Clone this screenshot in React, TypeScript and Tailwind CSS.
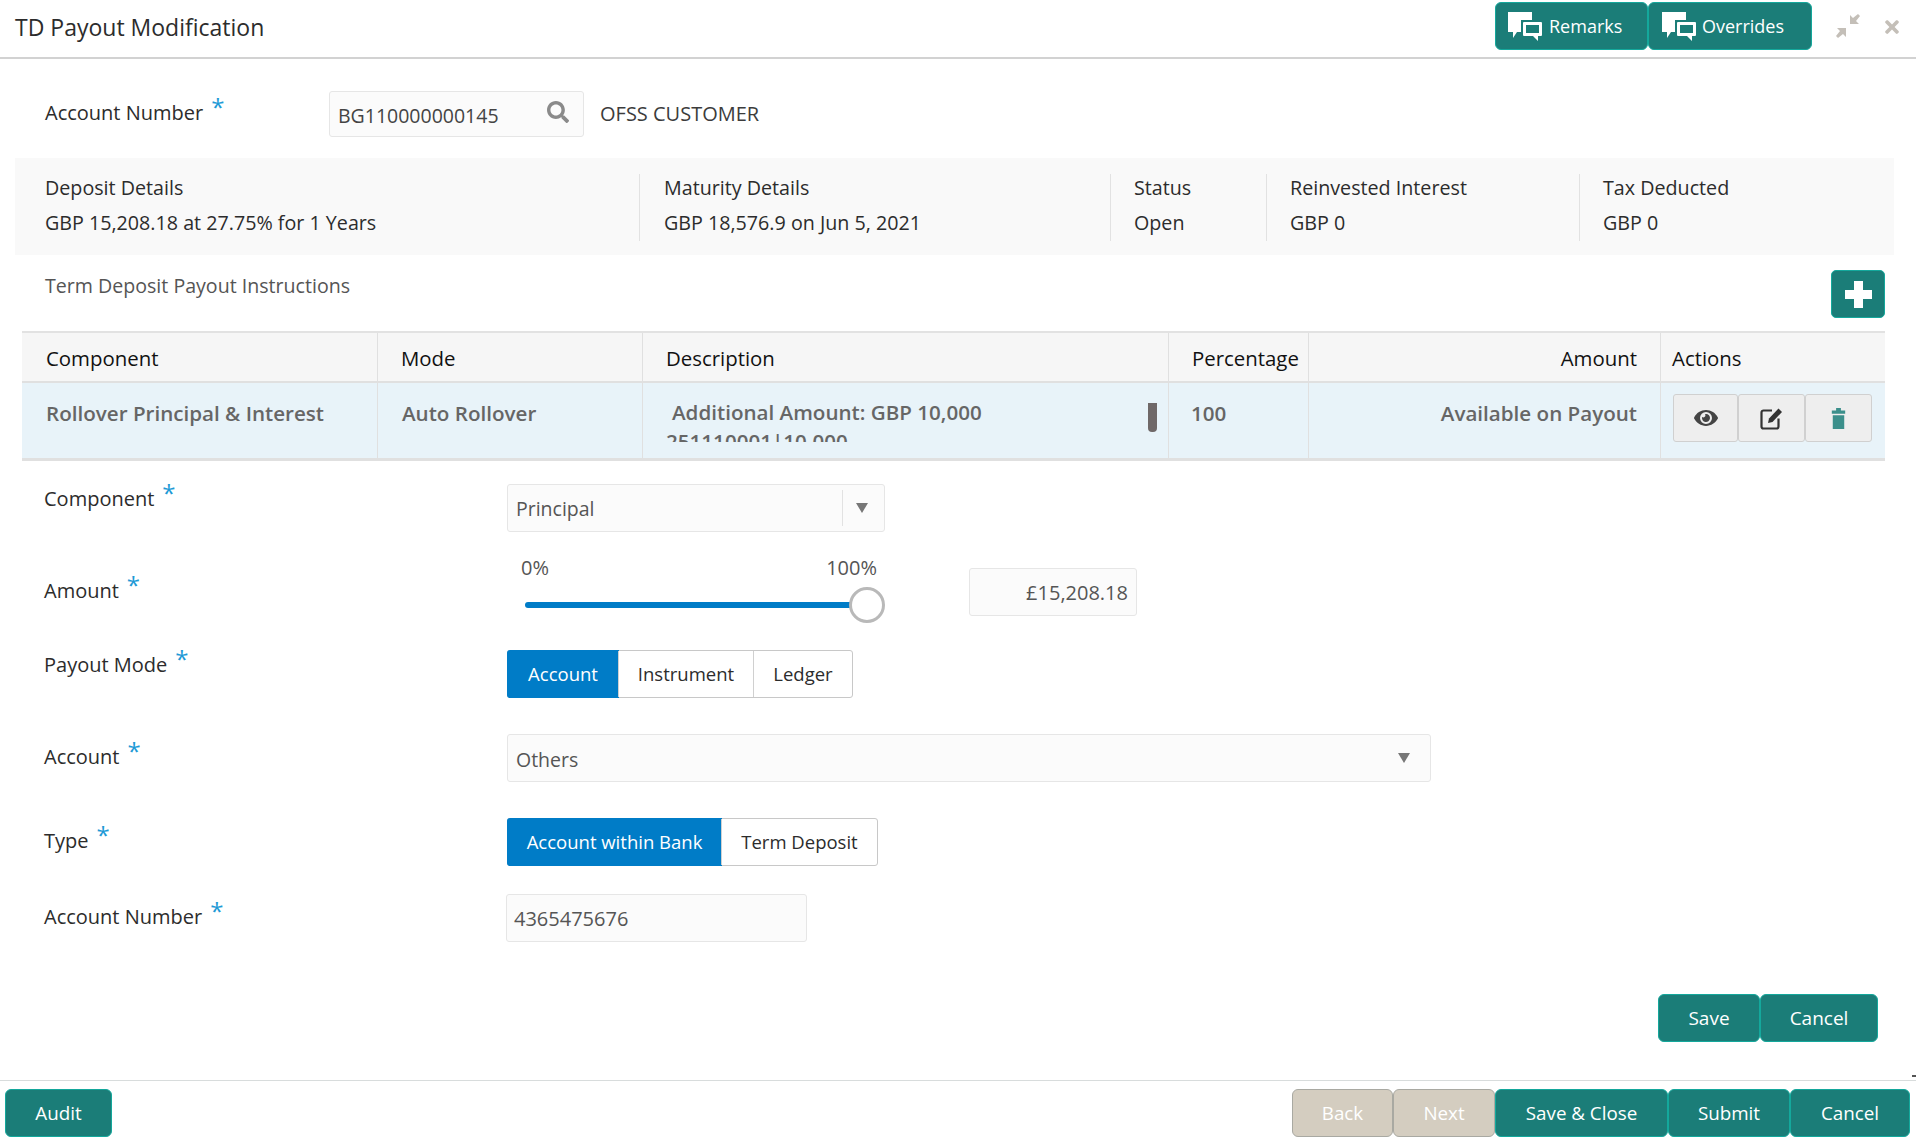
import { FaEye, FaSearch, FaTimes } from "react-icons/fa";

const teal = "bg-[#1b7d78] border border-[#14a89c] text-white rounded-[6px]";

const ChatIcon = () => (
  <svg width="36" height="30" viewBox="0 0 36 30" className="shrink-0">
    <path d="M1 1h24v20H10l-4 6v-6H1z" fill="#fff" />
    <path d="M14 9h22v17h-6v4l-6-4h-10z" fill="#1b7d78" />
    <path d="M17 11h17a1 1 0 0 1 1 1v12a1 1 0 0 1-1 1h-3v5l-5-5h-9a1 1 0 0 1-1-1V12a1 1 0 0 1 1-1zm2 3v8h13v-8z" fill="#fff" fillRule="evenodd" />
  </svg>
);

const Req = () => <span className="text-[#1e9ad6] text-[24px] leading-none ml-[8px] relative -top-[4px]">*</span>;

const Label = ({ text, className = "" }: { text: string; className?: string }) => (
  <div className={`w-[507px] pl-[44px] text-[20px] text-[#2c2c2c] shrink-0 ${className}`}>
    {text}
    <Req />
  </div>
);

const Segment = ({ items, widths }: { items: string[]; widths: string[] }) => (
  <div className="flex h-[48px] rounded-[3px] border border-[#c8c8c8] text-[18.5px] text-[#2c2c2c]">
    {items.map((item, i) => (
      <div
        key={item}
        className={`flex items-center justify-center ${widths[i]} ${i === 0 ? "bg-[#007cc7] text-white -m-px h-[48px] rounded-l-[3px]" : "border-l border-[#d0d0d0] first:border-0"}`}
      >
        {item}
      </div>
    ))}
  </div>
);

const SummaryCol = ({ title, value, className }: { title: string; value: string; className: string }) => (
  <div className={`h-[67px] flex flex-col gap-[8px] ${className}`}>
    <div className="text-[19.7px] leading-[27px] text-[#2c2c2c]">{title}</div>
    <div className="text-[19.7px] leading-[27px] text-[#2c2c2c]">{value}</div>
  </div>
);

const Caret = () => <div className="w-0 h-0 border-x-[6px] border-x-transparent border-t-[10px] border-t-[#777]" />;

const rowCell = "h-[78px] bg-[#e8f3f9] border-b-[3px] border-b-[#e0e0e0] pt-[15px] text-[20.6px] font-semibold text-[#666]";
const actionBtn = "h-[48px] bg-[#eeeeee] border border-[#d0d0d0] rounded-[3px] flex items-center justify-center";

export default function App() {
  return (
    <div className="w-[1916px] h-[1140px] bg-white flex flex-col overflow-hidden font-['Open_Sans','Noto_Sans',sans-serif] relative">
      <header className="h-[59px] shrink-0 border-b-2 border-[#d2d2d2] flex items-start pr-[14px]">
        <h1 className="pl-[15px] pt-[9px] text-[23px] leading-[36px] text-[#2c2c2c] flex-1">TD Payout Modification</h1>
        <div className="flex mt-[2px]">
          <button className={`${teal} w-[153px] h-[48px] flex items-center pl-[11px] gap-[6px] text-[18px]`}>
            <ChatIcon /> Remarks
          </button>
          <button className={`${teal} w-[164px] h-[48px] flex items-center pl-[12px] gap-[5px] text-[18px]`}>
            <ChatIcon /> Overrides
          </button>
        </div>
        <svg width="26" height="26" viewBox="0 0 26 26" className="ml-[23px] mt-[13px]" fill="#c4bfb8">
          <path d="M15 11V2l3 3 5-4 2 2-4 5 3 3zM11 15v9l-3-3-5 4-2-2 4-5-3-3z" />
        </svg>
        <FaTimes className="ml-[21px] mt-[17px] text-[#c4bfb8] text-[20px]" />
      </header>

      <section className="flex mt-[32px] h-[46px] shrink-0 items-start">
        <div className="w-[329px] pl-[45px] pt-[7px] text-[20px] text-[#2c2c2c]">
          Account Number
          <Req />
        </div>
        <div className="w-[255px] h-[46px] border border-[#e6e6e6] rounded-[3px] bg-[#fbfbfb] flex items-center justify-between pl-[8px] pr-[14px] text-[19.5px] text-[#444]">
          <span className="pt-[4px]">BG110000000145</span>
          <FaSearch className="text-[#8a8a8a] text-[22px] -mt-[4px]" />
        </div>
        <div className="ml-[16px] pt-[8px] text-[20px] text-[#3c3c3c]">OFSS CUSTOMER</div>
      </section>

      <section className="ml-[15px] mr-[22px] mt-[21px] h-[97px] shrink-0 bg-[#f9f9f9] flex items-center pt-[1px]">
        <SummaryCol className="w-[625px] pl-[30px] border-r border-[#e2e2e2]" title="Deposit Details" value="GBP 15,208.18 at 27.75% for 1 Years" />
        <SummaryCol className="w-[471px] pl-[24px] border-r border-[#e2e2e2]" title="Maturity Details" value="GBP 18,576.9 on Jun 5, 2021" />
        <SummaryCol className="w-[156px] pl-[23px] border-r border-[#e2e2e2]" title="Status" value="Open" />
        <SummaryCol className="w-[313px] pl-[23px] border-r border-[#e2e2e2]" title="Reinvested Interest" value="GBP 0" />
        <SummaryCol className="pl-[23px]" title="Tax Deducted" value="GBP 0" />
      </section>

      <section className="flex justify-between mt-[15px] h-[48px] shrink-0 pl-[45px] pr-[31px]">
        <div className="text-[19.6px] text-[#555] pt-[1px]">Term Deposit Payout Instructions</div>
        <button className="w-[54px] h-[48px] bg-[#1b7d78] border border-[#14a89c] rounded-[5px] flex items-center justify-center">
          <svg width="27" height="27" viewBox="0 0 27 27" fill="#fff">
            <path d="M9 0h9v9h9v9h-9v9H9v-9H0V9h9z" />
          </svg>
        </button>
      </section>

      <section className="ml-[22px] w-[1863px] mt-[13px] shrink-0 border-t-2 border-[#e2e2e2] grid grid-cols-[356px_265px_526px_140px_352px_224px]">
        {["Component", "Mode", "Description", "Percentage", "Amount", "Actions"].map((h, i) => (
          <div
            key={h}
            className={`h-[50px] bg-[#f6f6f6] border-b-2 border-[#e0e0e0] flex items-center pt-[2px] text-[20.4px] font-medium text-[#111] ${i < 5 ? "border-r border-[#e0e0e0]" : ""} ${i === 4 ? "justify-end pr-[23px]" : i === 5 ? "pl-[11px]" : i === 0 ? "pl-[24px]" : "pl-[23px]"}`}
          >
            {h}
          </div>
        ))}
        <div className={`${rowCell} border-r border-r-[#e0e0e0] pl-[24px]`}>Rollover Principal &amp; Interest</div>
        <div className={`${rowCell} border-r border-r-[#e0e0e0] pl-[24px]`}>Auto Rollover</div>
        <div className={`${rowCell} border-r border-r-[#e0e0e0] pl-[23px] flex justify-between pr-[11px]`}>
          <div className="h-[44px] overflow-hidden leading-[29px]">
            <div className="pl-[6px]">Additional Amount: GBP 10,000</div>
            <div>251110001|10,000</div>
          </div>
          <div className="w-[9px] h-[29px] mt-[5px] rounded-b-[4px] bg-[#6f6868]" />
        </div>
        <div className={`${rowCell} border-r border-r-[#e0e0e0] pl-[22px]`}>100</div>
        <div className={`${rowCell} border-r border-r-[#e0e0e0] pr-[23px] text-right`}>Available on Payout</div>
        <div className="h-[78px] bg-[#e8f3f9] border-b-[3px] border-b-[#e0e0e0] pl-[12px] pt-[11px] flex items-start">
          <button className={`${actionBtn} w-[65px] text-[#444] text-[24px]`}>
            <FaEye />
          </button>
          <button className={`${actionBtn} w-[67px]`}>
            <svg width="24" height="23" viewBox="0 0 24 23" fill="none">
              <path d="M12 3.500H3.500a2 2 0 0 0-2 2v14a2 2 0 0 0 2 2h13a2 2 0 0 0 2-2v-8" stroke="#333" strokeWidth="2.200" />
              <path d="M9 11.500 18.500 1.500l3.500 3.500-9.500 10-4.500 1z" fill="#333" />
            </svg>
          </button>
          <button className={`${actionBtn} w-[67px]`}>
            <svg width="15" height="21" viewBox="0 0 14 22" fill="#3b8f8b">
              <path d="M4.500 0h5v2.500H14v3.500H0V2.500h4.500zM1 7.500h12V22H1z" />
            </svg>
          </button>
        </div>
      </section>

      <section className="mt-[23px] flex flex-col shrink-0">
        <div className="flex h-[48px]">
          <Label text="Component" />
          <div className="w-[378px] h-[48px] border border-[#e6e6e6] rounded-[3px] bg-[#fbfbfb] flex items-center pl-[8px] text-[19.5px] text-[#555]">
            <span className="flex-1 pt-[2px]">Principal</span>
            <div className="w-[42px] h-[36px] border-l border-[#e2e2e2] flex items-center justify-center pr-[3px]">
              <Caret />
            </div>
          </div>
        </div>

        <div className="flex mt-[28px] h-[64px]">
          <Label text="Amount" className="pt-[16px]" />
          <div className="w-[378px] relative shrink-0">
            <div className="flex justify-between pl-[14px] pr-[8px] text-[20px] leading-[20px] text-[#555] -mt-[2px]">
              <span>0%</span>
              <span>100%</span>
            </div>
            <div className="ml-[18px] mt-[24px] h-[6px] w-[329px] rounded-full bg-[#007cc7]" />
            <div className="absolute right-0 top-[27px] w-[36px] h-[36px] rounded-full border-[3px] border-[#b9b9b9] bg-white" />
          </div>
          <div className="ml-[84px] mt-[8px] w-[168px] h-[48px] border border-[#e6e6e6] rounded-[3px] bg-[#fbfbfb] flex items-center justify-end pr-[8px] pt-[1px] text-[20px] text-[#555]">£15,208.18</div>
        </div>

        <div className="flex mt-[26px] h-[48px]">
          <Label text="Payout Mode" />
          <Segment items={["Account", "Instrument", "Ledger"]} widths={["w-[112px]", "w-[135px]", "w-[99px]"]} />
        </div>

        <div className="flex mt-[36px] h-[48px]">
          <Label text="Account" className="pt-[8px]" />
          <div className="w-[924px] h-[48px] border border-[#e6e6e6] rounded-[3px] bg-[#fbfbfb] flex items-center justify-between pl-[8px] pr-[20px] text-[19.5px] text-[#555]">
            <span className="pt-[3px]">Others</span>
            <Caret />
          </div>
        </div>

        <div className="flex mt-[36px] h-[48px]">
          <Label text="Type" className="pt-[8px]" />
          <Segment items={["Account within Bank", "Term Deposit"]} widths={["w-[215px]", "w-[156px]"]} />
        </div>

        <div className="flex mt-[28px] h-[48px]">
          <Label text="Account Number" className="pt-[8px]" />
          <div className="-ml-px w-[301px] h-[48px] border border-[#e6e6e6] rounded-[3px] bg-[#fbfbfb] flex items-center pl-[7px] pt-[2px] text-[20px] text-[#555]">4365475676</div>
        </div>
      </section>

      <section className="flex justify-end pr-[38px] mt-[52px] h-[48px] shrink-0 text-[19px]">
        <button className={`${teal} w-[102px]`}>Save</button>
        <button className={`${teal} w-[118px]`}>Cancel</button>
      </section>

      <footer className="mt-[38px] h-[60px] shrink-0 border-t border-[#d8dcdc] flex items-start justify-between pt-[8px] pl-[5px] pr-[6px] text-[18.8px]">
        <button className={`${teal} w-[107px] h-[48px]`}>Audit</button>
        <div className="flex h-[48px]">
          <button className="w-[101px] bg-[#d4cdc0] border border-[#a9a9a2] rounded-[6px] text-white">Back</button>
          <button className="w-[102px] bg-[#d4cdc0] border border-[#a9a9a2] rounded-[6px] text-white">Next</button>
          <button className={`${teal} w-[173px]`}>Save &amp; Close</button>
          <button className={`${teal} w-[122px]`}>Submit</button>
          <button className={`${teal} w-[120px]`}>Cancel</button>
        </div>
      </footer>
      <div className="absolute right-0 top-[1075px] w-[4px] h-[2px] bg-[#555]" />
    </div>
  );
}
